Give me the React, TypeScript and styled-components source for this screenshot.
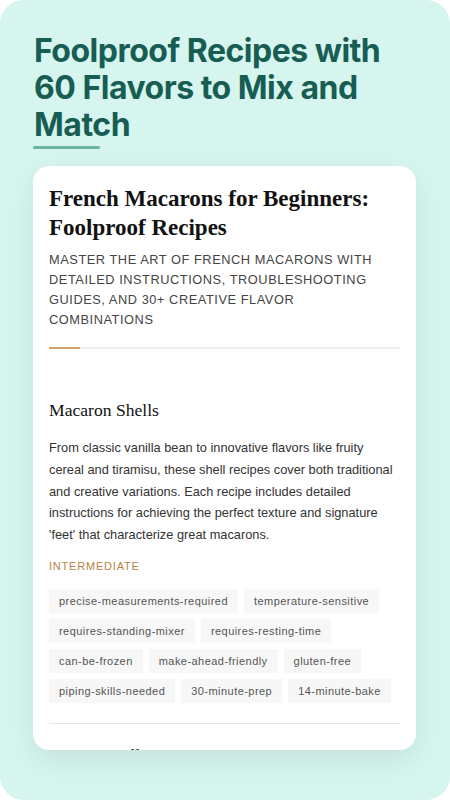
import React from 'react';
import styled, { createGlobalStyle } from 'styled-components';

const GlobalStyle = createGlobalStyle`
  * {
    box-sizing: border-box;
  }
  html,
  body {
    margin: 0;
    padding: 0;
    background: #ffffff;
  }
`;

interface Section {
  title: string;
  text: string;
  level: string;
  tags: string[];
}

const sections: Section[] = [
  {
    title: 'Macaron Shells',
    text: "From classic vanilla bean to innovative flavors like fruity cereal and tiramisu, these shell recipes cover both traditional and creative variations. Each recipe includes detailed instructions for achieving the perfect texture and signature 'feet' that characterize great macarons.",
    level: 'Intermediate',
    tags: [
      'precise-measurements-required',
      'temperature-sensitive',
      'requires-standing-mixer',
      'requires-resting-time',
      'can-be-frozen',
      'make-ahead-friendly',
      'gluten-free',
      'piping-skills-needed',
      '30-minute-prep',
      '14-minute-bake',
    ],
  },
  {
    title: 'Macaron Fillings',
    text: 'Buttercreams, ganaches, curds and jams that pair with every shell flavor, with notes on consistency, storage and how long each filling needs to mature.',
    level: 'Beginner',
    tags: ['no-bake', 'make-ahead-friendly', 'can-be-frozen'],
  },
];

const App = () => {
  return (
    <>
      <GlobalStyle />
      <Screen>
        <PageTitle>Foolproof Recipes with 60 Flavors to Mix and Match</PageTitle>
        <TitleBar />
        <Card>
          <CardHeader>
            <BookTitle>French Macarons for Beginners: Foolproof Recipes</BookTitle>
            <Subtitle>
              Master the art of French macarons with detailed instructions, troubleshooting guides, and 30+
              creative flavor combinations
            </Subtitle>
          </CardHeader>
          <HeaderRule>
            <RuleAccent />
          </HeaderRule>
          <SectionList>
            {sections.map((section) => (
              <SectionBlock key={section.title}>
                <SectionTitle>{section.title}</SectionTitle>
                <SectionText>{section.text}</SectionText>
                <Level>{section.level}</Level>
                <TagList>
                  {section.tags.map((tag) => (
                    <Tag key={tag}>{tag}</Tag>
                  ))}
                </TagList>
              </SectionBlock>
            ))}
          </SectionList>
        </Card>
      </Screen>
    </>
  );
};

export default App;

const Screen = styled.div`
  display: flex;
  flex-direction: column;
  width: 450px;
  height: 800px;
  padding: 33px 34px 50px 33px;
  background: #d5f5ee;
  border-radius: 24px;
  overflow: hidden;
`;

const PageTitle = styled.h1`
  margin: 0 0 0 1px;
  font-family: Inter, 'Liberation Sans', sans-serif;
  font-size: 32px;
  font-weight: 700;
  line-height: 1.15;
  letter-spacing: -0.5px;
  color: #185d53;
`;

const TitleBar = styled.div`
  width: 67px;
  height: 3px;
  margin-top: 3px;
  border-radius: 2px;
  background: #6db59f;
  flex-shrink: 0;
`;

const Card = styled.div`
  flex: 1;
  min-height: 0;
  margin-top: 17px;
  padding: 19px 16px 0;
  background: #ffffff;
  border-radius: 16px;
  box-shadow: 0 10px 30px rgba(0, 0, 0, 0.08);
  overflow: hidden;
`;

const CardHeader = styled.div`
  padding-bottom: 17px;
`;

const BookTitle = styled.h2`
  margin: 0;
  font-family: 'Liberation Serif', 'Times New Roman', serif;
  font-size: 23px;
  font-weight: 700;
  line-height: 28.5px;
  color: #111111;
`;

const Subtitle = styled.p`
  margin: 8px 0 0;
  font-family: 'Liberation Sans', Arial, sans-serif;
  font-size: 12.8px;
  line-height: 20px;
  letter-spacing: 0.55px;
  text-transform: uppercase;
  color: #444444;
`;

const HeaderRule = styled.div`
  display: flex;
  height: 2px;
  background: #eeeeee;
`;

const RuleAccent = styled.div`
  width: 31px;
  background: #d0a068;
`;

const SectionList = styled.div`
  padding-top: 30px;
`;

const SectionBlock = styled.div`
  padding: 20px 0;
  border-bottom: 1px solid #e4e4e4;
`;

const SectionTitle = styled.h3`
  margin: 0;
  font-family: 'Liberation Serif', 'Times New Roman', serif;
  font-size: 17.6px;
  font-weight: 400;
  line-height: 1.3;
  color: #111111;
`;

const SectionText = styled.p`
  margin: 15px 0 0;
  font-family: 'Liberation Sans', Arial, sans-serif;
  font-size: 12.8px;
  line-height: 21.7px;
  color: #333333;
`;

const Level = styled.div`
  margin-top: 12px;
  font-family: 'Liberation Sans', Arial, sans-serif;
  font-size: 11px;
  line-height: 1.5;
  letter-spacing: 0.8px;
  text-transform: uppercase;
  color: #b8843f;
`;

const TagList = styled.div`
  display: flex;
  flex-wrap: wrap;
  gap: 6px;
  margin-top: 15px;
`;

const Tag = styled.span`
  display: inline-flex;
  align-items: center;
  height: 24px;
  padding: 0 10px;
  background: #f7f7f7;
  font-family: 'Liberation Sans', Arial, sans-serif;
  font-size: 11px;
  letter-spacing: 0.45px;
  color: #555555;
`;
